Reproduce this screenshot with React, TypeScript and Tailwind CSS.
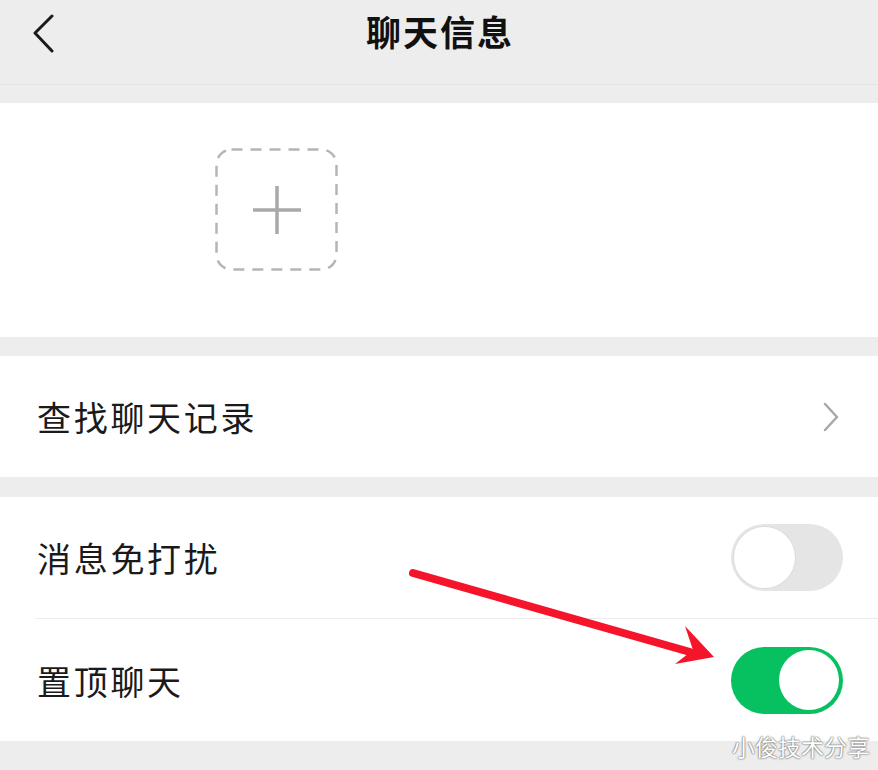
import React from "react";

const font = { fontFamily: '"Noto Sans CJK SC", "Noto Sans", sans-serif' };

function Toggle({ on }: { on: boolean }) {
  return (
    <div
      className={
        on
          ? "w-[112px] h-[67px] rounded-full bg-[#07c160] flex items-center justify-end px-[4px]"
          : "w-[112px] h-[67px] rounded-full bg-[#e5e5e5] flex items-center justify-start px-[3px]"
      }
    >
      <div
        className={
          on
            ? "w-[60px] h-[60px] rounded-full bg-white"
            : "w-[61px] h-[61px] rounded-full bg-white shadow-[0_0_0_1px_#dcdcdc]"
        }
      />
    </div>
  );
}

export default function App() {
  return (
    <div className="relative w-[878px] h-[770px] bg-[#ededed] overflow-hidden" style={font}>
      {/* header */}
      <div className="relative h-[85px] flex items-center justify-center border-b border-[#e4e4e4]">
        <svg className="absolute left-[30px] top-[14px]" width="28" height="40" viewBox="0 0 28 40">
          <path d="M22 2 L5 19 L22 37" fill="none" stroke="#1a1a1a" strokeWidth="3" strokeLinecap="round" strokeLinejoin="round" />
        </svg>
        <span className="text-[35px] font-bold text-[#111] -mt-[22px] tracking-[2px] pl-[2px]">聊天信息</span>
      </div>

      <div className="h-[18px]" />

      {/* members */}
      <div className="h-[234px] bg-white flex pl-[215px] pt-[45px]">
        <div className="w-[123px] h-[123px] flex items-center justify-center">
          <svg width="123" height="123" viewBox="0 0 123 123" className="absolute">
            <rect x="1.5" y="1.5" width="120" height="120" rx="15" fill="none" stroke="#b5b5b5" strokeWidth="2.5" strokeDasharray="11 8" />
          </svg>
          <svg width="52" height="52" viewBox="0 0 52 52">
            <path d="M26 2 V50 M2 26 H50" stroke="#a9a9a9" strokeWidth="3.5" />
          </svg>
        </div>
      </div>

      <div className="h-[19px]" />

      {/* search */}
      <div className="h-[121px] bg-white flex items-center justify-between pl-[37px] pr-[38px]">
        <span className="text-[34px] text-[#1a1a1a] tracking-[2.7px]">查找聊天记录</span>
        <svg width="18" height="30" viewBox="0 0 18 30">
          <path d="M3 2 L15 15 L3 28" fill="none" stroke="#a8a8a8" strokeWidth="2.5" strokeLinecap="round" strokeLinejoin="round" />
        </svg>
      </div>

      <div className="h-[20px]" />

      {/* toggles */}
      <div className="bg-white pl-[35px]">
        <div className="h-[122px] flex items-center justify-between pr-[35px] border-b border-[#ececec]">
          <span className="text-[34px] text-[#1a1a1a] tracking-[2.7px] pl-[2px]">消息免打扰</span>
          <Toggle on={false} />
        </div>
        <div className="h-[122px] flex items-center justify-between pr-[35px]">
          <span className="text-[34px] text-[#1a1a1a] tracking-[2.7px] pl-[2px]">置顶聊天</span>
          <Toggle on={true} />
        </div>
      </div>

      {/* annotation arrow */}
      <svg className="absolute left-0 top-0" width="878" height="770" viewBox="0 0 878 770">
        <path d="M413 573 L690 652" stroke="#f5142a" strokeWidth="8" strokeLinecap="round" />
        <path d="M685 626 L714 657 L675 664 L693 650 Z" fill="#f5142a" />
      </svg>

      <span
        className="absolute right-[8px] top-[729px] text-[23px] text-white tracking-[0px]"
        style={{ textShadow: "0 0 2px #555, 0 0 1px #777" }}
      >
        小俊技术分享
      </span>
    </div>
  );
}
